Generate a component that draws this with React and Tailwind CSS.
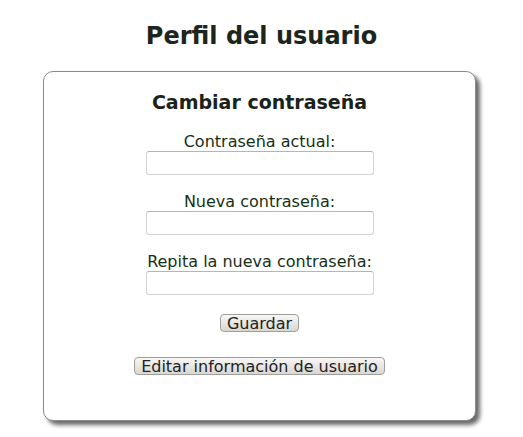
import React from 'react';

export default function App() {
  const fields = ['Contraseña actual:', 'Nueva contraseña:', 'Repita la nueva contraseña:'];

  return (
    <div className="min-h-screen bg-white font-['DejaVu_Sans',sans-serif] pt-[21px]">
      <h1 className="text-center text-[24px] leading-[30px] font-bold text-[#1c261c]">Perfil del usuario</h1>

      <div className="ml-[43px] mt-[20px] w-[433px] h-[350px] rounded-[10px] border border-[#8a8a8a] bg-white shadow-[4px_4px_4px_#6a6a6a] flex flex-col items-center pt-[20px]">
        <h2 className="text-[19px] leading-[21px] font-bold text-[#1a231a]">Cambiar contraseña</h2>

        <form className="flex flex-col items-center mt-[20px]" onSubmit={(e) => e.preventDefault()}>
          {fields.map((label, i) => (
            <div key={label} className={`flex flex-col items-center ${i > 0 ? 'mt-[18px]' : ''}`}>
              <label className="text-[16px] leading-[18px] text-[#163016]">{label}</label>
              <input
                type="password"
                className="w-[228px] h-[24px] rounded-[3px] border border-[#d2d2d2] border-t-[#b5b5b5] bg-white outline-none"
              />
            </div>
          ))}

          <button
            type="submit"
            className="mt-[19px] h-[18px] px-[6px] rounded-[4px] border border-[#a09e9a] bg-gradient-to-b from-[#f8f7f5] to-[#dad7d2] text-[16px] leading-[15px] text-[#222]"
          >
            Guardar
          </button>
        </form>

        <button
          type="button"
          className="mt-[25px] h-[18px] px-[6px] rounded-[4px] border border-[#a09e9a] bg-gradient-to-b from-[#f8f7f5] to-[#dad7d2] text-[16px] leading-[15px] text-[#222]"
        >
          Editar información de usuario
        </button>
      </div>
    </div>
  );
}
